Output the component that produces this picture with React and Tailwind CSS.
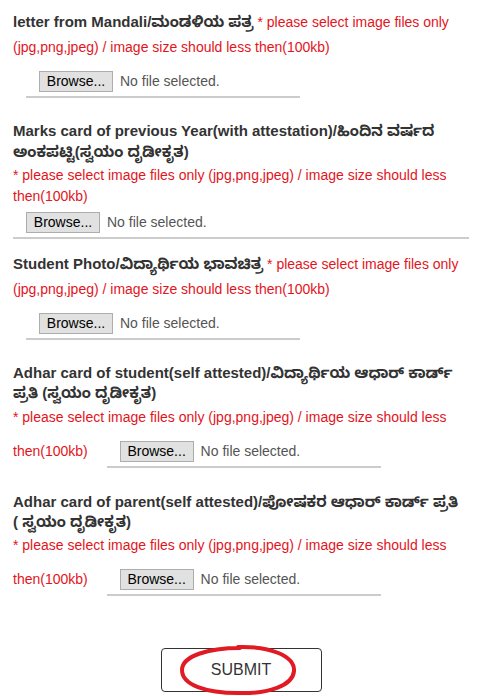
import React from 'react';

const FileField = ({ className = '' }) => (
  <div className={`border-b-2 border-[#cccccc] pb-[4px] pl-[13px] ${className}`}>
    <button
      type="button"
      className="h-[21px] w-[74px] border border-[#adadad] bg-[#e1e1e1] text-[14px] leading-[19px] text-black"
    >
      Browse...
    </button>
    <span className="ml-[7px] text-[14px] text-[#555555]">No file selected.</span>
  </div>
);

const Hint = ({ children }) => (
  <span className="text-[#e3141c]">{children}</span>
);

const HINT = '* please select image files only (jpg,png,jpeg) / image size should less then(100kb)';

export default function App() {
  return (
    <div className="min-h-[696px] w-[477px] bg-white px-[13px] pr-[8px] text-[14px] text-[#333333] [font-family:'Liberation_Sans',Arial,'Noto_Sans_Kannada','Noto_Sans',sans-serif]">
      {/* letter from Mandali */}
      <div className="pt-[10px] leading-[25px]">
        <span className="text-[15px] font-bold leading-[24px]">letter from Mandali/ಮಂಡಳಿಯ ಪತ್ರ</span>{' '}
        <Hint>{HINT}</Hint>
        <FileField className="ml-[13px] mt-[11px] inline-block w-[274px] leading-[21px]" />
      </div>

      {/* marks card */}
      <div className="mt-[22px]">
        <div className="whitespace-nowrap text-[15px] font-bold leading-[21px]">
          Marks card of previous Year(with attestation)/ಹಿಂದಿನ ವರ್ಷದ
          <br />
          ಅಂಕಪಟ್ಟಿ(ಸ್ವಯಂ ದೃಡೀಕೃತ)
        </div>
        <div className="mt-[3px] leading-[21px]">
          <Hint>{HINT}</Hint>
        </div>
        <FileField className="mt-[5px] leading-[21px]" />
      </div>

      {/* student photo */}
      <div className="mt-[13px] leading-[25px]">
        <span className="text-[15px] font-bold leading-[24px]">Student Photo/ವಿದ್ಯಾರ್ಥಿಯ ಭಾವಚಿತ್ರ</span>{' '}
        <Hint>{HINT}</Hint>
        <FileField className="ml-[13px] mt-[11px] inline-block w-[274px] leading-[21px]" />
      </div>

      {/* adhar student */}
      <div className="mt-[23px]">
        <div className="whitespace-nowrap text-[15px] font-bold leading-[20px]">
          Adhar card of student(self attested)/ವಿದ್ಯಾರ್ಥಿಯ ಆಧಾರ್ ಕಾರ್ಡ್
          <br />
          ಪ್ರತಿ (ಸ್ವಯಂ ದೃಡೀಕೃತ)
        </div>
        <div className="mt-[4px] leading-[20px]">
          <Hint>{HINT}</Hint>{' '}
          <FileField className="ml-[15px] mt-[14px] inline-block w-[274px] leading-[21px]" />
        </div>
      </div>

      {/* adhar parent */}
      <div className="mt-[24px]">
        <div className="whitespace-nowrap text-[15px] font-bold leading-[20px]">
          Adhar card of parent(self attested)/ಪೋಷಕರ ಆಧಾರ್ ಕಾರ್ಡ್ ಪ್ರತಿ
          <br />
          ( ಸ್ವಯಂ ದೃಡೀಕೃತ)
        </div>
        <div className="mt-[3px] leading-[20px]">
          <Hint>{HINT}</Hint>{' '}
          <FileField className="ml-[15px] mt-[14px] inline-block w-[274px] leading-[21px]" />
        </div>
      </div>

      <div className="mt-[52px] flex justify-center pb-[4px]">
        <div className="relative">
          <button
            type="button"
            className="h-[44px] w-[161px] rounded-[4px] border border-[#333333] bg-white text-[16px] text-[#333333]"
          >
            SUBMIT
          </button>
          <svg
            className="pointer-events-none absolute left-[17px] top-[-5px]"
            width="120"
            height="54"
            viewBox="0 0 120 54"
          >
            <path
              d="M60 4 C 92 3, 117 13, 116 28 C 115 42, 92 51, 60 50 C 28 50, 4 42, 4 27 C 4 13, 30 5, 62 5"
              fill="none"
              stroke="#e01b24"
              strokeWidth="4"
              strokeLinecap="round"
            />
          </svg>
        </div>
      </div>
    </div>
  );
}
